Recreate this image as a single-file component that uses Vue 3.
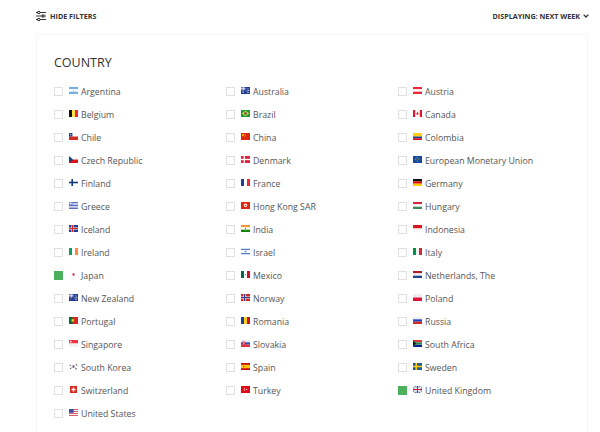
<script setup>
const R = (x, y, w, h, f) => ({ x, y, w, h, f })
const P = (d, f) => ({ d, f })
const hs = (...c) => c.map((f, i) => R(0, (i * 7) / c.length, 9, 7 / c.length, f))
const vs = (...c) => c.map((f, i) => R((i * 9) / c.length, 0, 9 / c.length, 7, f))
const nordic = (bg, cross, inner) => [
  R(0, 0, 9, 7, bg),
  R(2.5, 0, 2, 7, cross),
  R(0, 2.5, 9, 2, cross),
  ...(inner ? [R(3, 0, 1, 7, inner), R(0, 3, 9, 1, inner)] : [])
]
const ensign = [
  R(0, 0, 9, 7, '#1f3f94'),
  R(0, 0, 4.5, 3.5, '#5a6fb5'),
  R(1.8, 0, 0.9, 3.5, '#e5e5f0'),
  R(0, 1.3, 4.5, 0.9, '#e5e5f0'),
  R(6.5, 1.5, 1, 1, '#f4f4f4'),
  R(5.5, 3.5, 1, 1, '#f4f4f4'),
  R(7.3, 3.2, 1, 1, '#f4f4f4'),
  R(6.5, 5, 1, 1, '#f4f4f4')
]
const flags = {
  Argentina: [...hs('#75b0e0', '#ffffff', '#75b0e0'), R(4, 3, 1, 1, '#e8c35a')],
  Australia: [...ensign, R(1.5, 4.5, 1.2, 1.2, '#f4f4f4')],
  Austria: hs('#ed2939', '#ffffff', '#ed2939'),
  Belgium: vs('#111111', '#fae042', '#ed2939'),
  Brazil: [R(0, 0, 9, 7, '#1a9b3c'), P('M4.5 .8 8.2 3.5 4.5 6.2 .8 3.5z', '#f2d21f'), R(3.4, 2.4, 2.2, 2.2, '#22408f')],
  Canada: [R(0, 0, 9, 7, '#ffffff'), R(0, 0, 2.2, 7, '#e8112d'), R(6.8, 0, 2.2, 7, '#e8112d'), P('M4.5 1.4 5.7 4 5.2 4.7H3.8L3.3 4z', '#e8112d')],
  Chile: [R(0, 0, 9, 7, '#ffffff'), R(0, 3.5, 9, 3.5, '#d72b1f'), R(0, 0, 3.4, 3.5, '#1f3f94'), R(1.2, 1.2, 1, 1, '#ffffff')],
  China: [R(0, 0, 9, 7, '#de2910'), R(1.2, 1.2, 1.6, 1.6, '#ffde00'), R(3.5, .8, .7, .7, '#ffde00'), R(4.2, 2, .7, .7, '#ffde00'), R(3.5, 3.3, .7, .7, '#ffde00')],
  Colombia: [R(0, 0, 9, 3.5, '#fcd116'), R(0, 3.5, 9, 1.75, '#1f3f94'), R(0, 5.25, 9, 1.75, '#ce1126')],
  'Czech Republic': [R(0, 0, 9, 3.5, '#ffffff'), R(0, 3.5, 9, 3.5, '#d7141a'), P('M0 0 4 3.5 0 7z', '#11457e')],
  Denmark: [R(0, 0, 9, 7, '#e0243f'), R(2.6, 0, 1.3, 7, '#ffffff'), R(0, 2.85, 9, 1.3, '#ffffff')],
  'European Monetary Union': [R(0, 0, 9, 7, '#164a9c'), R(3.8, 1.2, .9, .9, '#e9cf3e'), R(2.4, 2.8, .9, .9, '#e9cf3e'), R(5.4, 2.8, .9, .9, '#e9cf3e'), R(3.8, 4.6, .9, .9, '#e9cf3e')],
  Finland: [R(0, 0, 9, 7, '#ffffff'), R(2.4, 0, 1.6, 7, '#123a7a'), R(0, 2.7, 9, 1.6, '#123a7a')],
  France: vs('#1f3f94', '#ffffff', '#ed2939'),
  Germany: hs('#111111', '#dd0000', '#ffce00'),
  Greece: [...hs('#5d70c4', '#c8cfe8', '#5d70c4', '#c8cfe8', '#5d70c4'), R(0, 0, 3.5, 3, '#5d70c4'), R(1.4, 0, .8, 3, '#dfe3f2'), R(0, 1.1, 3.5, .8, '#dfe3f2')],
  'Hong Kong SAR': [R(0, 0, 9, 7, '#de2910'), P('M4.5 1.2 6.4 2.6 5.7 5H3.3L2.6 2.6z', '#ffd9d9'), R(4, 3, 1, 1, '#de2910')],
  Hungary: hs('#d5293f', '#ffffff', '#3f8a5a'),
  Iceland: nordic('#1f3f94', '#ffffff', '#d72828'),
  India: [...hs('#f79433', '#ffffff', '#138808'), R(4, 3, 1, 1, '#4a5aa8')],
  Indonesia: hs('#d5171f', '#f7f7f7'),
  Ireland: vs('#169b62', '#ffffff', '#ff883e'),
  Israel: [R(0, 0, 9, 7, '#ffffff'), R(0, .8, 9, 1, '#2a5cb8'), R(0, 5.2, 9, 1, '#2a5cb8'), R(3.6, 2.7, 1.8, 1.6, '#6f8fd0')],
  Italy: vs('#009246', '#f1f2f1', '#ce2b37'),
  Japan: [R(0, 0, 9, 7, '#ffffff'), R(3.5, 2.5, 2, 2, '#c8102e')],
  Mexico: [...vs('#006847', '#ffffff', '#ce1126'), R(4, 3, 1, 1, '#8a6a3a')],
  'Netherlands, The': hs('#ae1c28', '#f0f0f0', '#21468b'),
  'New Zealand': [...ensign, R(1.5, 4.5, 1, 1, '#e25050')],
  Norway: nordic('#d72828', '#ffffff', '#1f3f94'),
  Poland: hs('#eeeeee', '#dc143c'),
  Portugal: [R(0, 0, 9, 7, '#da291c'), R(0, 0, 3.6, 7, '#046a38'), R(2.5, 2.2, 2.4, 2.4, '#f2d21f')],
  Romania: vs('#1f3f94', '#fcd116', '#ce1126'),
  Russia: hs('#f0f0f0', '#1c3fc4', '#d52b1e'),
  Singapore: [R(0, 0, 9, 3.5, '#ef3340'), R(0, 3.5, 9, 3.5, '#f2f2f2'), R(1, 1, 1.4, 1.4, '#ffffff')],
  Slovakia: [...hs('#e8e8f0', '#2a4fa8', '#e0333f'), R(1.5, 1.5, 2.6, 3.6, '#d83040'), R(2.5, 2.2, .7, 2.2, '#ffffff')],
  'South Africa': [R(0, 0, 9, 2.4, '#de3831'), R(0, 4.6, 9, 2.4, '#002395'), R(0, 2.4, 9, 2.2, '#2a8a55'), P('M0 0 4.2 3.5 0 7z', '#2a8a55'), P('M0 1 3 3.5 0 6z', '#111111')],
  'South Korea': [R(0, 0, 9, 7, '#ffffff'), P('M3.3 3.5a1.2 1.2 0 0 1 2.4 0z', '#cd2e3a'), P('M3.3 3.5a1.2 1.2 0 0 0 2.4 0z', '#0f3f8f'), P('M.8 1.4 2.2 2.6 1.7 3.1.4 2zM7 1 8.5 2.2 8 2.8 6.5 1.6zM.8 5.6 2.2 4.4 2.7 5 1.3 6.1zM6.6 4.8 8 5.9 7.5 6.4 6.1 5.3z', '#222222')],
  Spain: [R(0, 0, 9, 7, '#c60b1e'), R(0, 1.75, 9, 3.5, '#ffc400'), R(2, 2.8, 1.2, 1.4, '#b5662a')],
  Sweden: [R(0, 0, 9, 7, '#1c5a9c'), R(2.5, 0, 1.6, 7, '#fecc00'), R(0, 2.7, 9, 1.6, '#fecc00')],
  Switzerland: [R(1, 0, 7, 7, '#d52b1e'), R(3.8, 1.5, 1.4, 4, '#ffffff'), R(2.5, 2.8, 4, 1.4, '#ffffff')],
  Turkey: [R(0, 0, 9, 7, '#e30a17'), P('M4.8 2a1.6 1.6 0 1 0 0 3 1.3 1.3 0 1 1 0-3z', '#ffffff'), R(5.2, 3, 1, 1, '#ffffff')],
  'United Kingdom': [R(0, 0, 9, 7, '#5a6cb0'), P('M0 0H1.2L9 6V7H7.8L0 1zM9 0V1L1.2 7H0V6L7.8 0z', '#e8e8f0'), R(3.5, 0, 2, 7, '#ffffff'), R(0, 2.5, 9, 2, '#ffffff'), R(4, 0, 1, 7, '#cf142b'), R(0, 3, 9, 1, '#cf142b')],
  'United States': [...hs('#d9596a', '#f5f5f5', '#d9596a', '#f5f5f5', '#d9596a', '#f5f5f5', '#d9596a'), R(0, 0, 4.6, 3.8, '#3c4f9a')]
}
const countries = [
  'Argentina', 'Australia', 'Austria', 'Belgium', 'Brazil', 'Canada', 'Chile', 'China', 'Colombia',
  'Czech Republic', 'Denmark', 'European Monetary Union', 'Finland', 'France', 'Germany', 'Greece',
  'Hong Kong SAR', 'Hungary', 'Iceland', 'India', 'Indonesia', 'Ireland', 'Israel', 'Italy', 'Japan',
  'Mexico', 'Netherlands, The', 'New Zealand', 'Norway', 'Poland', 'Portugal', 'Romania', 'Russia',
  'Singapore', 'Slovakia', 'South Africa', 'South Korea', 'Spain', 'Sweden', 'Switzerland', 'Turkey',
  'United Kingdom', 'United States'
]
const checked = ['Japan', 'United Kingdom']
</script>

<template>
  <div class="page">
    <header class="bar">
      <div class="bar-item">
        <svg class="filter-icon" viewBox="0 0 10 10" width="10" height="10" fill="none" stroke="#333" stroke-width="1">
          <path d="M0 1.5H10M0 5H10M0 8.5H10" />
          <rect x="2" y=".5" width="1.6" height="2" fill="#fff" />
          <rect x="6.2" y="4" width="1.6" height="2" fill="#fff" />
          <rect x="2" y="7.5" width="1.6" height="2" fill="#fff" />
        </svg>
        <span>HIDE FILTERS</span>
      </div>
      <div class="bar-item">
        <span>DISPLAYING: NEXT WEEK</span>
        <svg viewBox="0 0 6 4" width="6" height="4" fill="none" stroke="#333" stroke-width="1.3">
          <path d="M.6.6 3 3 5.4.6" />
        </svg>
      </div>
    </header>
    <section class="card">
      <h2 class="title">COUNTRY</h2>
      <ul class="grid">
        <li v-for="name in countries" :key="name" class="row">
          <span class="box" :class="{ on: checked.includes(name) }"></span>
          <svg class="flag" viewBox="0 0 9 7" width="9" height="7">
            <template v-for="(s, i) in flags[name]" :key="i">
              <path v-if="s.d" :d="s.d" :fill="s.f" />
              <rect v-else :x="s.x" :y="s.y" :width="s.w" :height="s.h" :fill="s.f" />
            </template>
          </svg>
          <span class="label">{{ name }}</span>
        </li>
      </ul>
    </section>
  </div>
</template>

<style scoped>
.page {
  width: 600px;
  height: 432px;
  overflow: hidden;
  background: #fff;
  font-family: "Open Sans", "Liberation Sans", sans-serif;
  color: #555;
  box-sizing: border-box;
  padding: 9px 11px 0 36px;
}
.bar {
  display: flex;
  justify-content: space-between;
  align-items: center;
  height: 13px;
  margin-bottom: 12px;
}
.bar-item {
  display: flex;
  align-items: center;
  gap: 3px;
  font-size: 7.2px;
  font-weight: 700;
  color: #333;
}
.filter-icon {
  margin-right: 1px;
}
.card {
  border: 1px solid #f6f6f6;
  border-bottom: 0;
  padding: 17px 17px 0;
  height: 420px;
  width: 552px;
  box-sizing: border-box;
}
.title {
  margin: 0 0 7px;
  font-size: 12.5px;
  line-height: 21px;
  font-weight: 400;
  color: #333;
}
.grid {
  list-style: none;
  margin: 0;
  padding: 0;
  display: grid;
  grid-template-columns: repeat(3, 172px);
  grid-auto-rows: 23px;
}
.row {
  display: flex;
  align-items: center;
  font-size: 8.75px;
}
.box {
  width: 9px;
  height: 9px;
  border: 1px solid #e0e0e0;
  box-sizing: border-box;
  background: #fff;
}
.box.on {
  background: #4caf5b;
  border-color: #4caf5b;
}
.flag {
  margin: 0 3px 2px 6px;
}
</style>
